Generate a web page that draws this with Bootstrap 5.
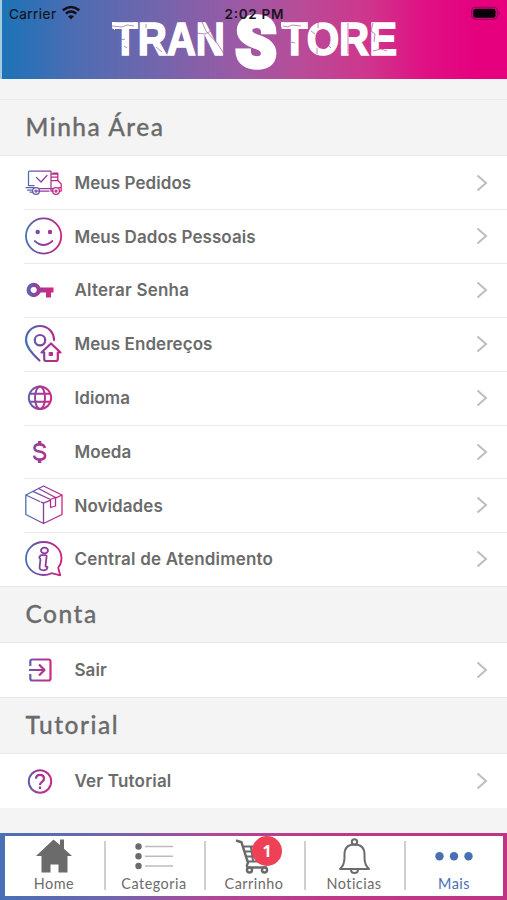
<!DOCTYPE html>
<html lang="pt-BR">
<head>
<meta charset="utf-8">
<meta name="viewport" content="width=device-width, initial-scale=1">
<title>TranStore</title>
<link href="https://cdn.jsdelivr.net/npm/bootstrap@5.3.0/dist/css/bootstrap.min.css" rel="stylesheet">
<style>
html,body{height:100%;overflow:hidden}
body{background:#f4f4f4;color:#6b6b6b;font-family:Inter,"Liberation Sans",sans-serif}
.screen{height:900px;width:507px}
.topbar{height:79px;background:linear-gradient(90deg,#a5cbe4 0 1.5px,#1d74b6 2px,#2e70b6 30px,#4b6db3 70px,#6f66ad 150px,#9a5aa5 235px,#b84c98 300px,#cf358b 370px,#e01084 425px,#e6007e 480px,#e6007e)}
.topbar svg{display:block}
.spacer{height:20px}
.section-title{height:56.7px;padding-left:25.5px;border-top:1px solid #e6e8e9;border-bottom:1px solid #e6e8e9;font:500 24.5px/54px Lato,sans-serif;letter-spacing:1.5px;color:#6b6b6b;margin:0;-webkit-text-stroke:.3px #6b6b6b}
.menu-row{height:53.8px;margin-left:24px;padding-right:18px;color:#6b6b6b;font-weight:600;font-size:17px}
.menu-row .label{margin-left:10.5px;padding-top:2px;letter-spacing:.06px}
.menu-row .label.wide{letter-spacing:.2px}
.menu-row+.menu-row{box-shadow:inset 0 1px #e9eaeb}
.solo{height:54.3px}
.ico{width:40px;height:40px;flex:none;fill:none;stroke:url(#brand);stroke-width:1.8;stroke-linecap:round;stroke-linejoin:round}
.ico.small-ico{stroke:url(#brandS)}
.chev{width:14px;height:20px;fill:none;stroke:#bdbdc0;stroke-width:2}
.tabbar{height:67px;padding:3px 4px 4px 5px;background:linear-gradient(90deg,#4870b5,#7065ad 22%,#b04797 42%,#c03888 65%,#bf3484)}
.tabs-inner{padding-right:0}
.tab{flex:0 0 100px;left:-1px;font:400 14.4px/16px Lato,sans-serif;letter-spacing:.5px;color:#6b6b6b;text-decoration:none;padding-top:2px}
.tab+.tab::before{content:"";position:absolute;left:-.5px;top:5px;height:49px;border-left:2px solid #cfcfcf}
.tab svg{display:block;width:48px;height:38px}
.tab.current{color:#4a70b4}
.count{position:absolute;left:48px;top:0;width:30px;height:30px;background:#ee4056;color:#fff;font:700 16px/30px "Open Sans",sans-serif;text-align:center;letter-spacing:0}
</style>
<script src="https://cdn.jsdelivr.net/npm/bootstrap@5.3.0/dist/js/bootstrap.bundle.min.js"></script>
</head>
<body>
<svg width="0" height="0" class="position-absolute"><defs>
<linearGradient id="brand" gradientUnits="userSpaceOnUse" x1="1" y1="0" x2="38" y2="0"><stop offset="0" stop-color="#3f72b8"/><stop offset=".5" stop-color="#8a3f9c"/><stop offset="1" stop-color="#d0207e"/></linearGradient>
<linearGradient id="brandS" gradientUnits="userSpaceOnUse" x1="3" y1="0" x2="29" y2="0"><stop offset="0" stop-color="#5b66b0"/><stop offset=".5" stop-color="#a43896"/><stop offset="1" stop-color="#d42880"/></linearGradient>
</defs></svg>
<div class="screen d-flex flex-column">
<header class="topbar flex-shrink-0">
<svg width="507" height="79" viewBox="0 0 507 79">
 <g fill="#fff" stroke="#fff" stroke-width="1.6" font-family="Liberation Sans,sans-serif" font-weight="700">
  <text x="113" y="54.5" font-size="46" textLength="112" lengthAdjust="spacingAndGlyphs">TRAN</text>
  <text x="235.500" y="66.500" font-size="70" stroke-width="4.500" font-family="Roboto,sans-serif" font-weight="900" textLength="41" lengthAdjust="spacingAndGlyphs">S</text>
  <text x="282" y="54.5" font-size="46" textLength="115" lengthAdjust="spacingAndGlyphs">TORE</text>
 </g>
 <path fill="#fff" d="M112 22h3v8l-3-2zM134 22h3v5l-3 2zM281 22h3v6l-3-1zM304 22h3v6l-3 1z"/>
 <g fill="none" stroke="#995ca8" stroke-width=".7">
  <path d="M112 26l10 1 5-2 7 1M120 40l5-1M146 24v4M156 47l6 5M197 33l8 1 6-3M202 22l4 9 11 12 7 11M127 48l-3-2"/>
  <path stroke="#bd4b97" d="M283 26l5 1 4-2 9 1M291 42l4 1M311 31l4 3M331 48l-4-4M318 22v6M317 48v6M348 23v31M373 23l-2 8 4 3-1 8M373 51l8-2 6 2"/>
 </g>
 <g font-family="Inter,sans-serif" fill="#161320">
  <text x="9" y="18.500" font-size="13.500" textLength="47" stroke="#161320" stroke-width=".2">Carrier</text>
  <text x="224.500" y="18.500" font-size="13.500" font-weight="600" textLength="59">2:02 PM</text>
 </g>
 <g fill="none" stroke="#111018" stroke-width="2.500"><path d="M62.800 10.300q8.200-6.700 16.500 0M65.800 13.600q5.300-4.300 10.500 0"/></g>
 <path d="M68 16.300q3-2.200 6 0l-3 3.300z" fill="#111018"/>
 <rect x="471.800" y="7.200" width="25.500" height="12" rx="3.600" fill="none" stroke="#8d0b57" stroke-width="1.100"/>
 <rect x="473.300" y="8.700" width="22.200" height="9" rx="2.200" fill="#08000a"/><path d="M498.600 11v4.200q1.500-.8 1.500-2.100t-1.500-2.100" fill="#8d0b57"/>
</svg>
</header>
<main class="flex-grow-1">
<div class="spacer"></div>
<h2 class="section-title">Minha Área</h2>
<div class="bg-white">
 <a class="menu-row d-flex align-items-center text-decoration-none">
  <svg class="ico" style="stroke-width:1.25" viewBox="0 0 40 40"><path d="M4.500 22.500V9q0-1 1-1h21.500v17.500H15M27.500 11h6.300v6.500h-6.300M33.800 17.500l3.400 3.500v7h-1.700M27.500 14h6M29 25.500h-2v2.500h2.200M33.800 11v-.8h-5M2 24.500h8M3.500 27h4M6 29h3M14 28h11M10 22.500H4.500M37 24.500h-2M12.500 14.500l4.500 4.500 6-6.500"/><circle cx="12" cy="28" r="3.400"/><circle cx="12" cy="28" r="1"/><circle cx="32" cy="28" r="3.400"/><circle cx="32" cy="28" r="1"/></svg>
  <span class="label flex-grow-1">Meus Pedidos</span><svg class="chev" viewBox="0 0 14 20"><path d="M2.500 2.500l8.500 7.500-8.500 7.500"/></svg></a>
 <a class="menu-row d-flex align-items-center text-decoration-none">
  <svg class="ico" viewBox="0 0 40 40"><circle cx="19.600" cy="20" r="17.600"/><path d="M10.800 25q8.700 8 17.600 0"/><g fill="url(#brand)" stroke="none"><circle cx="13.700" cy="16" r="2.200"/><circle cx="26" cy="16" r="2.200"/></g></svg>
  <span class="label flex-grow-1">Meus Dados Pessoais</span><svg class="chev" viewBox="0 0 14 20"><path d="M2.500 2.500l8.500 7.500-8.500 7.500"/></svg></a>
 <a class="menu-row d-flex align-items-center text-decoration-none">
  <svg class="ico small-ico" viewBox="0 0 40 40"><circle cx="9.700" cy="20" r="5.100" stroke-width="4.200"/><path d="M15.500 17.500h14v5H27v5h-5v-5h-6.500z" fill="url(#brandS)" stroke="none"/></svg>
  <span class="label wide flex-grow-1">Alterar Senha</span><svg class="chev" viewBox="0 0 14 20"><path d="M2.500 2.500l8.500 7.500-8.500 7.500"/></svg></a>
 <a class="menu-row d-flex align-items-center text-decoration-none">
  <svg class="ico" style="stroke-width:2.200" viewBox="0 0 40 40"><path d="M15.500 36.500Q2 24 2 16.200C2 8 8.300 2 16 2s14 6.200 14 14"/><circle cx="16" cy="16.200" r="5.200"/><path d="M17.500 28.500l9.500-9 9.500 9h-2.700v6.500q0 2-2 2H22.200q-2 0-2-2v-6.500z"/><path d="M25.500 28.500h3v3h-3z" fill="url(#brand)" stroke-width="1"/></svg>
  <span class="label flex-grow-1">Meus Endereços</span><svg class="chev" viewBox="0 0 14 20"><path d="M2.500 2.500l8.500 7.500-8.500 7.500"/></svg></a>
 <a class="menu-row d-flex align-items-center text-decoration-none">
  <svg class="ico small-ico" style="stroke-width:2" viewBox="0 0 40 40"><circle cx="16" cy="19.800" r="11.200"/><ellipse cx="16" cy="19.800" rx="5" ry="11.200"/><path d="M6 15.800h20M6 23.800h20"/></svg>
  <span class="label flex-grow-1">Idioma</span><svg class="chev" viewBox="0 0 14 20"><path d="M2.500 2.500l8.500 7.500-8.500 7.500"/></svg></a>
 <a class="menu-row d-flex align-items-center text-decoration-none">
  <svg class="ico small-ico" style="stroke-width:2.600;stroke-linecap:butt" viewBox="0 0 40 40"><path d="M20.800 16q-.5-3.600-5.300-3.600-5 0-5 3.500 0 2.700 5 3.700 5.600 1.100 5.600 4.200 0 3.700-5.300 3.700-5.300 0-5.700-3.800"/><path d="M15.600 9v3M15.600 27.500v3.500" stroke-width="3.400"/></svg>
  <span class="label flex-grow-1">Moeda</span><svg class="chev" viewBox="0 0 14 20"><path d="M2.500 2.500l8.500 7.500-8.500 7.500"/></svg></a>
 <a class="menu-row d-flex align-items-center text-decoration-none">
  <svg class="ico" style="stroke-width:1.300" viewBox="0 0 40 40"><path d="M19.500 1L38 10v19.500L19.500 38.500 1.800 29.500V10zM19.500 18v20.500M1.800 10l14 6.500M17.300 17.200l2.200 1 6-2.600M31.500 13.200L38 10M14.500 3.500l17 9v8.500l-5 1.500v-8L9 6.300M26.500 14.500l5-2"/></svg>
  <span class="label flex-grow-1">Novidades</span><svg class="chev" viewBox="0 0 14 20"><path d="M2.500 2.500l8.500 7.500-8.500 7.500"/></svg></a>
 <a class="menu-row d-flex align-items-center text-decoration-none">
  <svg class="ico" viewBox="0 0 40 40"><path d="M27.500 34.200Q24 36 19.500 36C9.500 36 2 28.700 2 19.500S9.500 3 19.500 3 37.500 10 37.500 19.500q0 5-3.300 9.200l2 7.600z"/><ellipse cx="20.500" cy="11.500" rx="3.500" ry="2.900"/><path d="M16 17.500q0-1.300 1.500-1.300h3.800q1.500 0 1.300 1.500l-1.100 9.200q0 1 1.200.8 1 0 .7 1.200-.5 2.400-4 2.400-4.200 0-3.800-3.500l.8-7q.1-1.200-.7-1.400-.7-.3-.2-1.900z"/></svg>
  <span class="label wide flex-grow-1">Central de Atendimento</span><svg class="chev" viewBox="0 0 14 20"><path d="M2.500 2.500l8.500 7.500-8.500 7.500"/></svg></a>
</div>
<h2 class="section-title">Conta</h2>
<div class="bg-white"><a class="menu-row solo d-flex align-items-center text-decoration-none">
 <svg class="ico small-ico" style="stroke-width:2.200;stroke-linecap:butt" viewBox="0 0 40 40"><path d="M6.300 16v-4.500q0-2 2-2H24.500q2 0 2 2v17q0 2-2 2H8.300q-2 0-2-2V24M5 20h15M15 14.500l5.500 5.500-5.500 5.500"/></svg>
 <span class="label flex-grow-1">Sair</span><svg class="chev" viewBox="0 0 14 20"><path d="M2.500 2.500l8.500 7.500-8.500 7.500"/></svg></a></div>
<h2 class="section-title">Tutorial</h2>
<div class="bg-white"><a class="menu-row solo d-flex align-items-center text-decoration-none">
 <svg class="ico small-ico" style="stroke-width:2;stroke-linecap:butt" viewBox="0 0 40 40"><circle cx="16" cy="20.500" r="11.200"/><path d="M12 17.800q0-4 4-4t4 3.700q0 1.600-1.800 3.100-2.200 1.700-2.200 3.500M16 25.500v2.400" stroke-width="2.300"/></svg>
 <span class="label wide flex-grow-1">Ver Tutorial</span><svg class="chev" viewBox="0 0 14 20"><path d="M2.500 2.500l8.500 7.500-8.500 7.500"/></svg></a></div>
</main>
<nav class="tabbar flex-shrink-0"><div class="tabs-inner d-flex bg-white h-100">
 <a class="tab position-relative d-flex flex-column align-items-center"><svg viewBox="0 0 48 38"><path fill="#6b6b6b" d="M23.500 1.500L30 7V1.500h4v9.200l8 7.300h-4.500v16.500h-9v-8h-8v8h-9V18H6z"/></svg>Home</a>
 <a class="tab position-relative d-flex flex-column align-items-center"><svg viewBox="0 0 48 38"><g fill="#6b6b6b"><circle cx="8.500" cy="8.500" r="3.200"/><circle cx="8.500" cy="18.300" r="3.200"/><circle cx="8.500" cy="28" r="3.200"/></g><path stroke="#bcbcbc" stroke-width="1.400" d="M15 8.500h28M15 18.300h28M15 28h28"/></svg>Categoria</a>
 <a class="tab position-relative d-flex flex-column align-items-center"><svg viewBox="0 0 48 38"><g fill="none" stroke="#6b6b6b" stroke-width="2.500" stroke-linejoin="round"><path d="M6 2.500l5.500 1.800 6.500 20.500q-2.500 4 .5 4.700H37"/><path d="M13.500 8.500H40l-3 15H18M15 13.500h22M16.500 18.500h20M21 9l2 14M28 9v14" stroke-width="2"/><circle cx="19.500" cy="32" r="2.500"/><circle cx="34.500" cy="32" r="2.500"/></g></svg>Carrinho<span class="count rounded-circle">1</span></a>
 <a class="tab position-relative d-flex flex-column align-items-center"><svg viewBox="0 0 48 38"><g fill="none" stroke="#6b6b6b" stroke-width="2" stroke-linejoin="round"><path d="M10 31q4.500-4 4.500-11.500v-3Q14.500 6.500 24.500 6.500t10 10v3Q34.500 27 39 31z"/><circle cx="24.500" cy="4" r="2.700"/><path d="M21 31.500q0 3.500 3.500 3.500t3.500-3.500"/></g></svg>Noticias</a>
 <a class="tab current position-relative d-flex flex-column align-items-center"><svg viewBox="0 0 48 38"><g fill="#4a70b4"><circle cx="9.500" cy="18.300" r="4.200"/><circle cx="24" cy="18.300" r="4.200"/><circle cx="38.500" cy="18.300" r="4.200"/></g></svg>Mais</a>
</div></nav>
</div>
</body>
</html>
